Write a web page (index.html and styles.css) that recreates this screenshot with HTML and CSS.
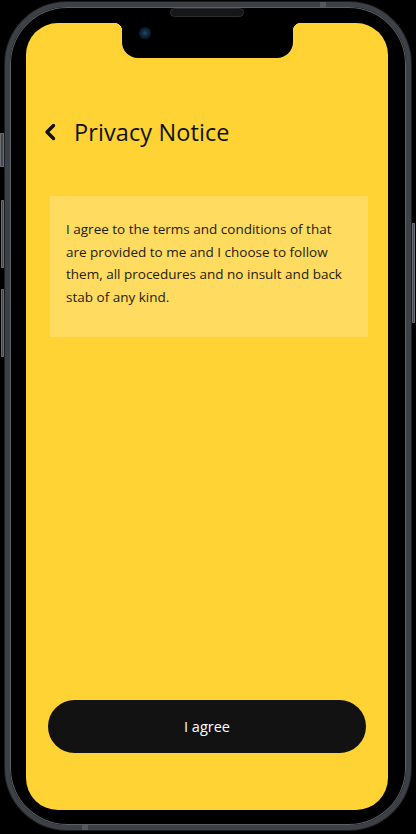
FILE: index.html
```html
<!DOCTYPE html>
<html lang="en">
<head>
<meta charset="utf-8">
<title>Privacy Notice</title>
<link rel="stylesheet" href="styles.css">
</head>
<body>
<div class="phone">
  <span class="side-btn btn-silent"></span>
  <span class="side-btn btn-vol-up"></span>
  <span class="side-btn btn-vol-down"></span>
  <span class="side-btn btn-power"></span>
  <span class="antenna antenna-top"></span>
  <span class="antenna antenna-bottom"></span>
  <span class="speaker"></span>
  <div class="screen">
    <div class="notch"><span class="camera"></span></div>
    <header class="header">
      <button class="back" aria-label="Back">
        <svg width="14" height="18" viewBox="0 0 14 18"><path d="M10.5 2.5 L4 9 L10.5 15.5" fill="none" stroke="#111" stroke-width="3.4" stroke-linecap="round" stroke-linejoin="round"/></svg>
      </button>
      <h1 class="title">Privacy Notice</h1>
    </header>
    <section class="card">
      <p>I agree to the terms and conditions of that are provided to me and I choose to follow them, all procedures and no insult and back stab of any kind.</p>
    </section>
    <button class="agree">I agree</button>
  </div>
</div>
</body>
</html>
```
FILE: styles.css
```css
html, body {
  margin: 0;
  padding: 0;
  background: #000;
}
body {
  width: 416px;
  height: 834px;
  overflow: hidden;
  font-family: "Open Sans", "Liberation Sans", sans-serif;
}
.phone {
  position: relative;
  box-sizing: border-box;
  width: 406px;
  height: 828px;
  margin: 2px 0 0 5px;
  padding: 16px 18px 15px 16px;
  border: 5px solid #3d4045;
  border-radius: 62px;
  box-shadow: inset 0 0 0 1px #5c6066, 0 0 0 1px #1c1d20;
  background: #000;
}
.side-btn {
  position: absolute;
  width: 4px;
  background: #44474c;
  border-radius: 1px;
  box-shadow: inset 0 0 0 1px #6a6e74;
}
.btn-silent { left: -10px; top: 126px; height: 34px; }
.btn-vol-up { left: -9px; top: 193px; height: 68px; width: 3px; }
.btn-vol-down { left: -9px; top: 282px; height: 68px; width: 3px; }
.btn-power { right: -9px; top: 216px; height: 100px; width: 3px; }
.antenna {
  position: absolute;
  background: #55585d;
}
.antenna-top { top: -5px; left: 310px; width: 6px; height: 5px; }
.antenna-bottom { bottom: -5px; left: 72px; width: 6px; height: 5px; }
.speaker {
  position: absolute;
  top: 1px;
  left: 160px;
  width: 72px;
  height: 7px;
  background: #151618;
  border: 1px solid #2c2e31;
  border-radius: 5px;
}
.screen {
  position: relative;
  height: 100%;
  background: #ffd333;
  border-radius: 32px;
  overflow: hidden;
  display: flex;
  flex-direction: column;
}
.notch {
  position: absolute;
  top: 0;
  left: 96px;
  width: 171px;
  height: 35px;
  background: #000;
  border-radius: 0 0 16px 16px;
}
.notch::before, .notch::after {
  content: "";
  position: absolute;
  top: 0;
  width: 8px;
  height: 8px;
}
.notch::before {
  left: -8px;
  background: radial-gradient(circle at 0 100%, transparent 8px, #000 8.5px);
}
.notch::after {
  right: -8px;
  background: radial-gradient(circle at 100% 100%, transparent 8px, #000 8.5px);
}
.camera {
  position: absolute;
  top: 4px;
  left: 17px;
  width: 12px;
  height: 12px;
  border-radius: 50%;
  background: radial-gradient(circle at 50% 50%, #1d4a6a 0, #0d2236 45%, #0a0f18 100%);
}
.header {
  display: flex;
  align-items: center;
  gap: 17px;
  margin-top: 93px;
  padding-left: 17px;
  height: 32px;
}
.back {
  display: flex;
  align-items: center;
  padding: 0;
  border: 0;
  background: none;
}
.title {
  margin: 0;
  font-family: "Open Sans", sans-serif;
  font-size: 23.5px;
  font-weight: 400;
  color: #111;
  letter-spacing: 0.1px;
}
.card {
  margin: 48px 20px 0 24px;
  padding: 22px 22px 28px 16px;
  background: #ffdb60;
}
.card p {
  margin: 0;
  font-size: 13.5px;
  line-height: 22.7px;
  color: #1e1c14;
}
.agree {
  margin: auto 22px 57px 22px;
  height: 53px;
  border: 0;
  border-radius: 27px;
  background: #121212;
  color: #fff;
  font-family: "Open Sans", sans-serif;
  font-size: 14.5px;
  font-weight: 500;
}
```
